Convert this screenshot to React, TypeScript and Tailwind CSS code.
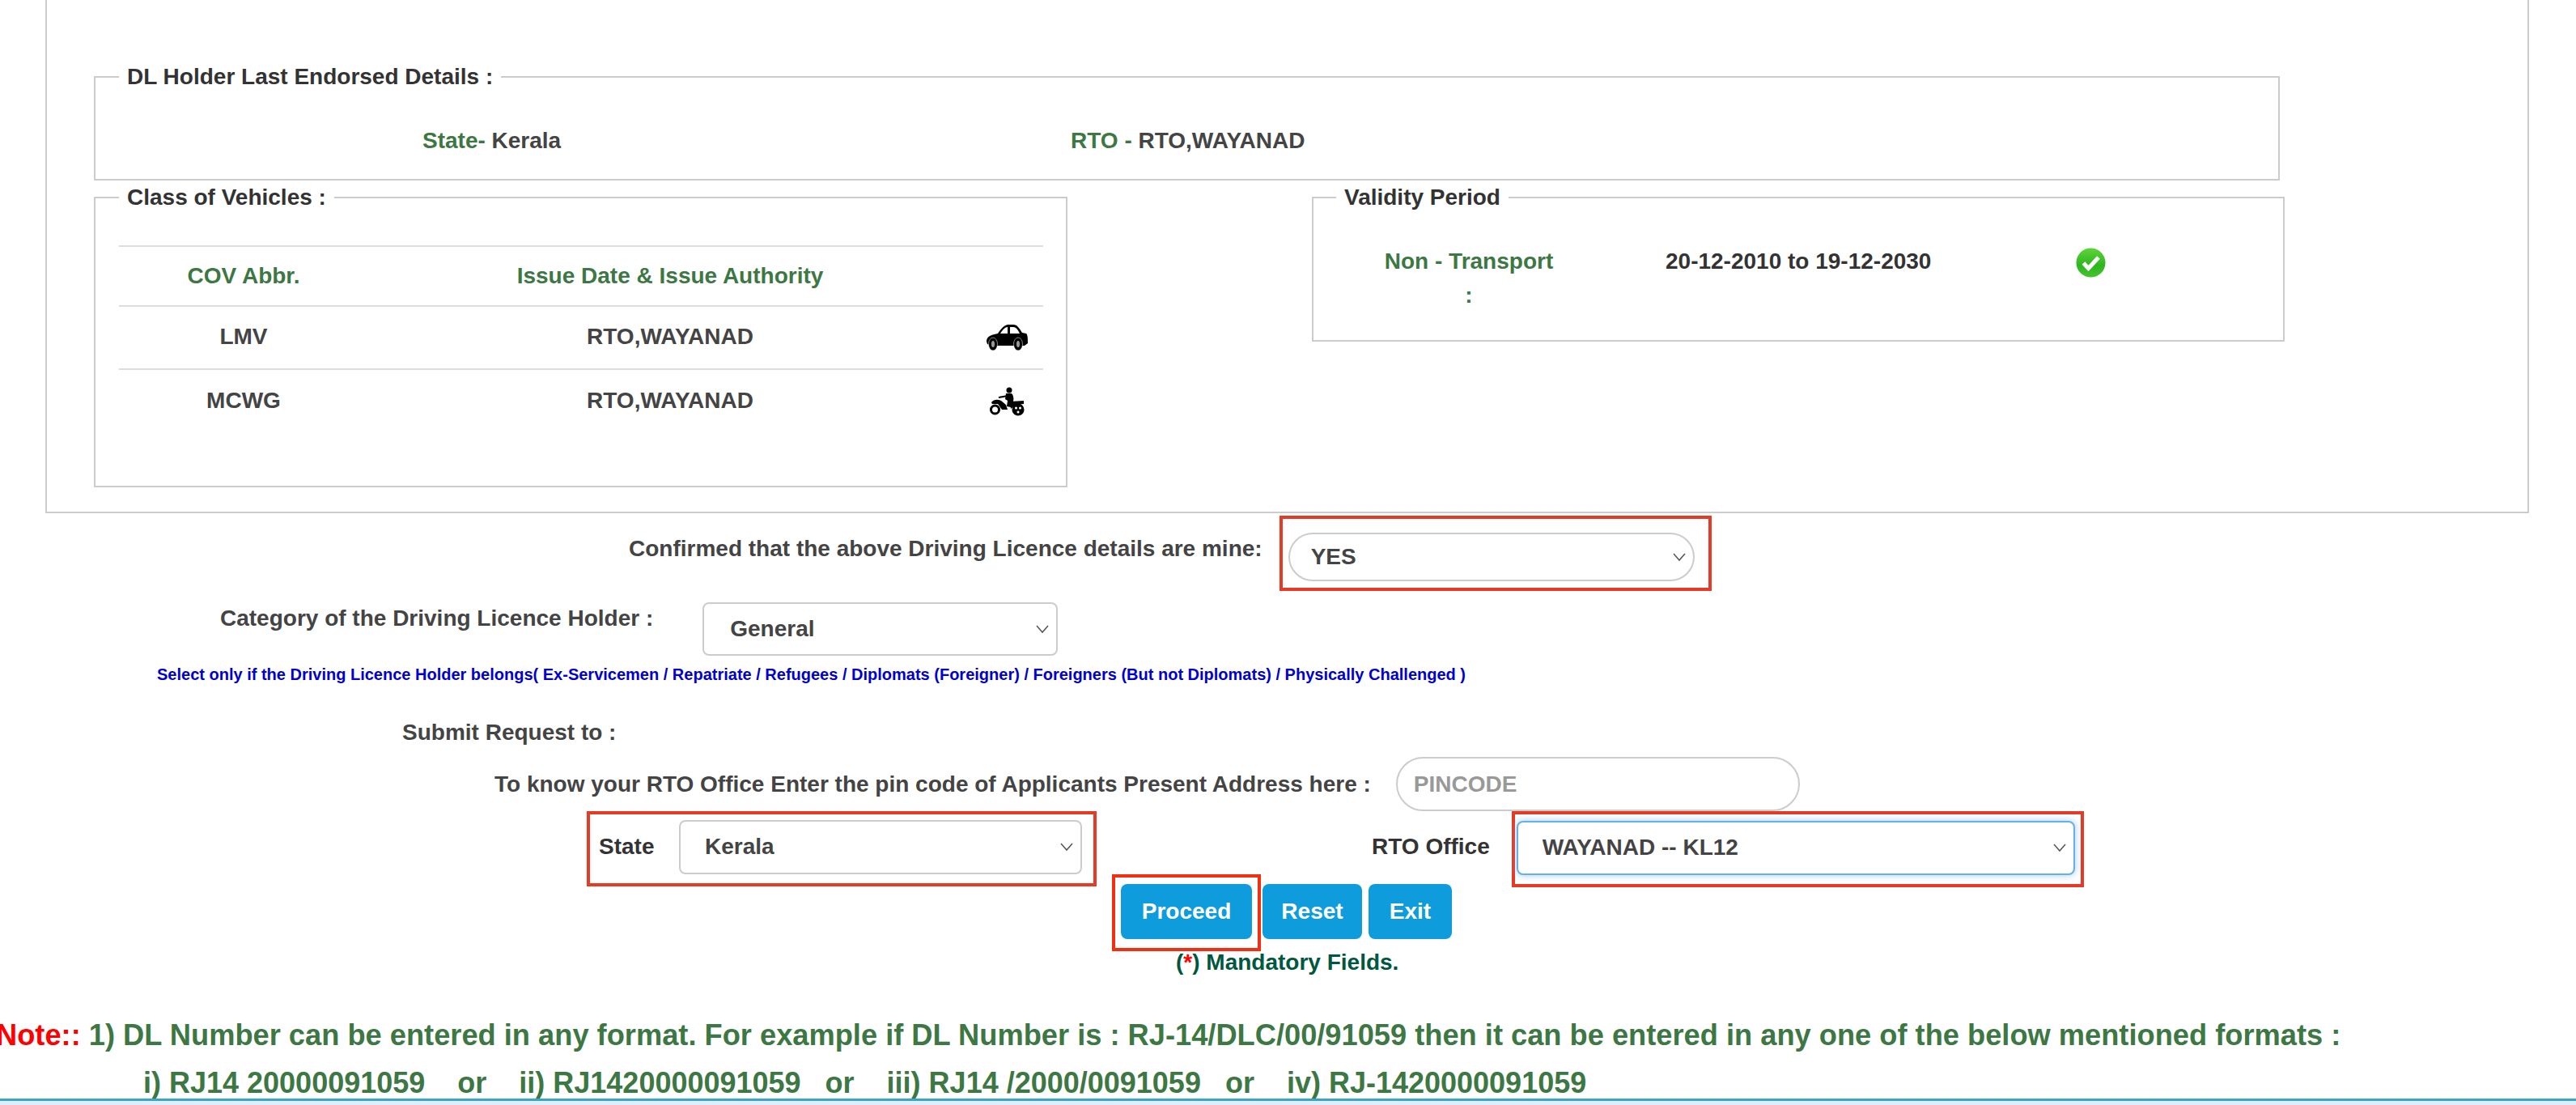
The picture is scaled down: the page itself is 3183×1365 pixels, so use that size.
import React from 'react';

const Chevron = () => (
    <svg viewBox="0 0 18 12" className="absolute right-[10px] top-1/2 -translate-y-1/2 w-[18px] h-[12px] pointer-events-none" fill="none" stroke="#555" strokeWidth="1.5">
        <path d="M2 2l7 8 7-8" />
    </svg>
);

const Dropdown: React.FC<{ value: string; className: string; rootClass: string }> = ({ value, className, rootClass }) => (
    <div className={`relative ${rootClass}`}>
        <select defaultValue={value} className={`appearance-none w-full h-full bg-white font-bold text-[28px] text-[#444] outline-none ${className}`}>
            <option>{value}</option>
        </select>
        <Chevron />
    </div>
);

const CarIcon = () => (
    <svg viewBox="0 0 52 34" className="w-[52px] h-[34px]" fill="#000">
        <path fillRule="evenodd" d="M0 22C0 16 4 14 14 12C18 6 22 1 27 1H33C38 1 41 6 44 11L49 12C51 13 51 20 51 24L47 27H6L1 25ZM17 12C20 7 23 4 26 4V12ZM29 4H33C37 4 39 8 41 12H29Z" />
        <ellipse cx="8" cy="25" rx="5.500" ry="8" stroke="#fff" strokeWidth="0.5" />
        <ellipse cx="39" cy="25" rx="5.500" ry="8" stroke="#fff" strokeWidth="0.5" />
        <ellipse cx="8" cy="25" rx="2" ry="4" fill="#999" />
        <ellipse cx="39" cy="25" rx="2" ry="4" fill="#999" />
    </svg>
);

const BikeIcon = () => (
    <svg viewBox="0 0 44 36" className="w-[44px] h-[36px]" fill="#000">
        <circle cx="24" cy="4" r="3.500" />
        <path d="M20 8H27C29 10 30 14 29 18L26 25L21 24L22 17L19 15Z" />
        <path d="M11 13L22 11" stroke="#000" strokeWidth="2" />
        <path d="M2 19C5 15 10 15 14 17L20 22L22 28H15L10 21L3 21Z" />
        <path d="M25 18L42 17L42 21L32 22L26 27Z" />
        <circle cx="6.500" cy="28" r="5" fill="none" stroke="#000" strokeWidth="3" />
        <circle cx="35" cy="28" r="7.500" />
        <circle cx="32.500" cy="26" r="1.500" fill="#fff" />
        <circle cx="37.500" cy="26" r="1.500" fill="#fff" />
        <circle cx="35" cy="31" r="1.500" fill="#fff" />
    </svg>
);

const CheckIcon = () => (
    <svg viewBox="0 0 37 37" className="w-[37px] h-[37px]">
        <defs>
            <linearGradient id="okGrad" x1="0" y1="0" x2="0" y2="1">
                <stop offset="0" stopColor="#5fd43a" />
                <stop offset="0.6" stopColor="#2fb51f" />
                <stop offset="1" stopColor="#45c52e" />
            </linearGradient>
        </defs>
        <circle cx="18.500" cy="18.500" r="18" fill="url(#okGrad)" />
        <path d="M9.500 19l6 6.500L28 12" fill="none" stroke="#fff" strokeWidth="5" />
    </svg>
);

const App: React.FC = () => {
    return (
        <div className="h-[1365px] w-full overflow-hidden bg-white relative font-['Liberation_Sans',Arial,sans-serif] font-bold text-[28px] leading-[40px] text-[#444]">

            {/* Details panel */}
            <div className="ml-[56px] w-[3069px] h-[634px] border-x-2 border-b-2 border-[#ccc] pl-[58px] pt-[75px]">

                {/* Last endorsed */}
                <fieldset className="w-[2701px] h-[148px] border-2 border-[#ccc] pl-[29px]">
                    <legend className="px-[10px] text-[#333]">DL Holder Last Endorsed Details :</legend>
                    <div className="flex pt-[39px]">
                        <div className="w-[1176px] pl-[375px]"><span className="text-[#3d7744]">State- </span>Kerala</div>
                        <div><span className="text-[#3d7744]">RTO - </span>RTO,WAYANAD</div>
                    </div>
                </fieldset>

                <div className="flex items-start mt-[1px]">
                    {/* Class of vehicles */}
                    <fieldset className="w-[1203px] h-[378px] border-2 border-[#ccc] pl-[29px] shrink-0">
                        <legend className="px-[10px] text-[#333]">Class of Vehicles :</legend>
                        <div className="w-[1142px] mt-[39px] border-t-2 border-[#ddd]">
                            <div className="flex h-[74px] items-center border-b-2 border-[#ddd] text-[#3d7744]">
                                <div className="w-[308px] text-center">COV Abbr.</div>
                                <div className="w-[746px] text-center">Issue Date &amp; Issue Authority</div>
                            </div>
                            <div className="flex h-[78px] items-center border-b-2 border-[#ddd]">
                                <div className="w-[308px] text-center pb-[2px]">LMV</div>
                                <div className="w-[746px] text-center pb-[2px]">RTO,WAYANAD</div>
                                <div className="w-[88px] flex justify-center"><CarIcon /></div>
                            </div>
                            <div className="flex h-[78px] items-center">
                                <div className="w-[308px] text-center pb-[2px]">MCWG</div>
                                <div className="w-[746px] text-center pb-[2px]">RTO,WAYANAD</div>
                                <div className="w-[88px] flex justify-center"><BikeIcon /></div>
                            </div>
                        </div>
                    </fieldset>

                    {/* Validity period */}
                    <fieldset className="ml-[302px] w-[1202px] h-[198px] border-2 border-[#ccc] pl-[28px] shrink-0">
                        <legend className="px-[10px] text-[#333]">Validity Period</legend>
                        <div className="flex pt-[38px]">
                            <div className="w-[268px] ml-[30px] text-center text-[#3d7744] leading-[42px]">Non - Transport<br />:</div>
                            <div className="ml-[109px] mt-[1px] w-[340px] text-[#333]">20-12-2010 to 19-12-2030</div>
                            <div className="ml-[167px] mt-[4px]"><CheckIcon /></div>
                        </div>
                    </fieldset>
                </div>
            </div>

            {/* Confirmation */}
            <div className="flex items-start mt-[3px] ml-[777px]">
                <div className="pt-[21px]">Confirmed that the above Driving Licence details are mine:</div>
                <div className="ml-[21px] w-[534px] h-[93px] border-4 border-[#e53a25] pl-[7px] pt-[17px]">
                    <Dropdown value="YES" rootClass="w-[502px] h-[60px]" className="rounded-full border-2 border-[#ccc] pl-[26px]" />
                </div>
            </div>

            {/* Category */}
            <div className="flex items-start mt-[14px] ml-[272px]">
                <div>Category of the Driving Licence Holder :</div>
                <Dropdown value="General" rootClass="ml-[61px] w-[439px] h-[66px]" className="rounded-[8px] border-2 border-[#ccc] pl-[32px]" />
            </div>
            <div className="ml-[194px] mt-[10px] text-[20px] leading-[26px] text-[#0000cd]">
                Select only if the Driving Licence Holder belongs( Ex-Servicemen / Repatriate / Refugees / Diplomats (Foreigner) / Foreigners (But not Diplomats) / Physically Challenged )
            </div>

            <div className="ml-[497px] mt-[39px]">Submit Request to :</div>

            {/* Pincode */}
            <div className="flex items-start mt-[10px] ml-[611px]">
                <div className="pt-[14px]">To know your RTO Office Enter the pin code of Applicants Present Address here :</div>
                <input placeholder="PINCODE" className="ml-[31px] w-[499px] h-[67px] rounded-full border-2 border-[#ccc] pl-[20px] font-bold outline-none placeholder:text-[#999]" />
            </div>

            {/* State and RTO office */}
            <div className="flex items-start ml-[725px]">
                <div className="flex items-center w-[630px] h-[93px] border-4 border-[#e53a25] pl-[11px] pb-[5px]">
                    <div className="w-[99px] text-[#333]">State</div>
                    <Dropdown value="Kerala" rootClass="w-[498px] h-[67px]" className="rounded-[8px] border-2 border-[#ccc] pl-[30px]" />
                </div>
                <div className="pl-[340px] pt-[24px] text-[#333]">RTO Office</div>
                <div className="ml-[27px] flex items-center w-[707px] h-[94px] border-4 border-[#e53a25] pl-[2px] pb-[4px]">
                    <Dropdown value="WAYANAD -- KL12" rootClass="w-[690px] h-[67px]" className="rounded-[8px] border-2 border-[#66afe9] shadow-[0_0_10px_rgba(102,175,233,0.6)] pl-[30px]" />
                </div>
            </div>

            {/* Buttons */}
            <div className="flex items-start ml-[1374px] -mt-[16px]">
                <div className="w-[184px] h-[95px] border-4 border-[#f03010] pl-[7px] pt-[8px]">
                    <button className="w-[162px] h-[68px] rounded-[8px] bg-[#0e9cdc] text-white">Proceed</button>
                </div>
                <button className="ml-[2px] mt-[12px] w-[123px] h-[68px] rounded-[8px] bg-[#0e9cdc] text-white">Reset</button>
                <button className="ml-[8px] mt-[12px] w-[103px] h-[68px] rounded-[8px] bg-[#0e9cdc] text-white">Exit</button>
            </div>

            <div className="ml-[1453px] -mt-[6px] text-[#00573f]">(<span className="text-[#f00]">*</span>) Mandatory Fields.</div>

            {/* Note */}
            <div className="mt-[40px] whitespace-pre leading-[59px] text-[#3d7744]">
                <div className="-ml-[5px] text-[36.25px]"><span className="text-[#f00]">Note:: </span>1) DL Number can be entered in any format. For example if DL Number is : RJ-14/DLC/00/91059 then it can be entered in any one of the below mentioned formats :</div>
                <div className="ml-[177px] text-[36px]">i) RJ14 20000091059    or    ii) RJ1420000091059   or    iii) RJ14 /2000/0091059   or    iv) RJ-1420000091059</div>
            </div>

            {/* Footer strip */}
            <div className="absolute left-0 right-0 bottom-0 h-[8px] border-t-[3px] border-[#3aa6c4] bg-[#dceffb]" />
        </div>
    );
};

export default App;
